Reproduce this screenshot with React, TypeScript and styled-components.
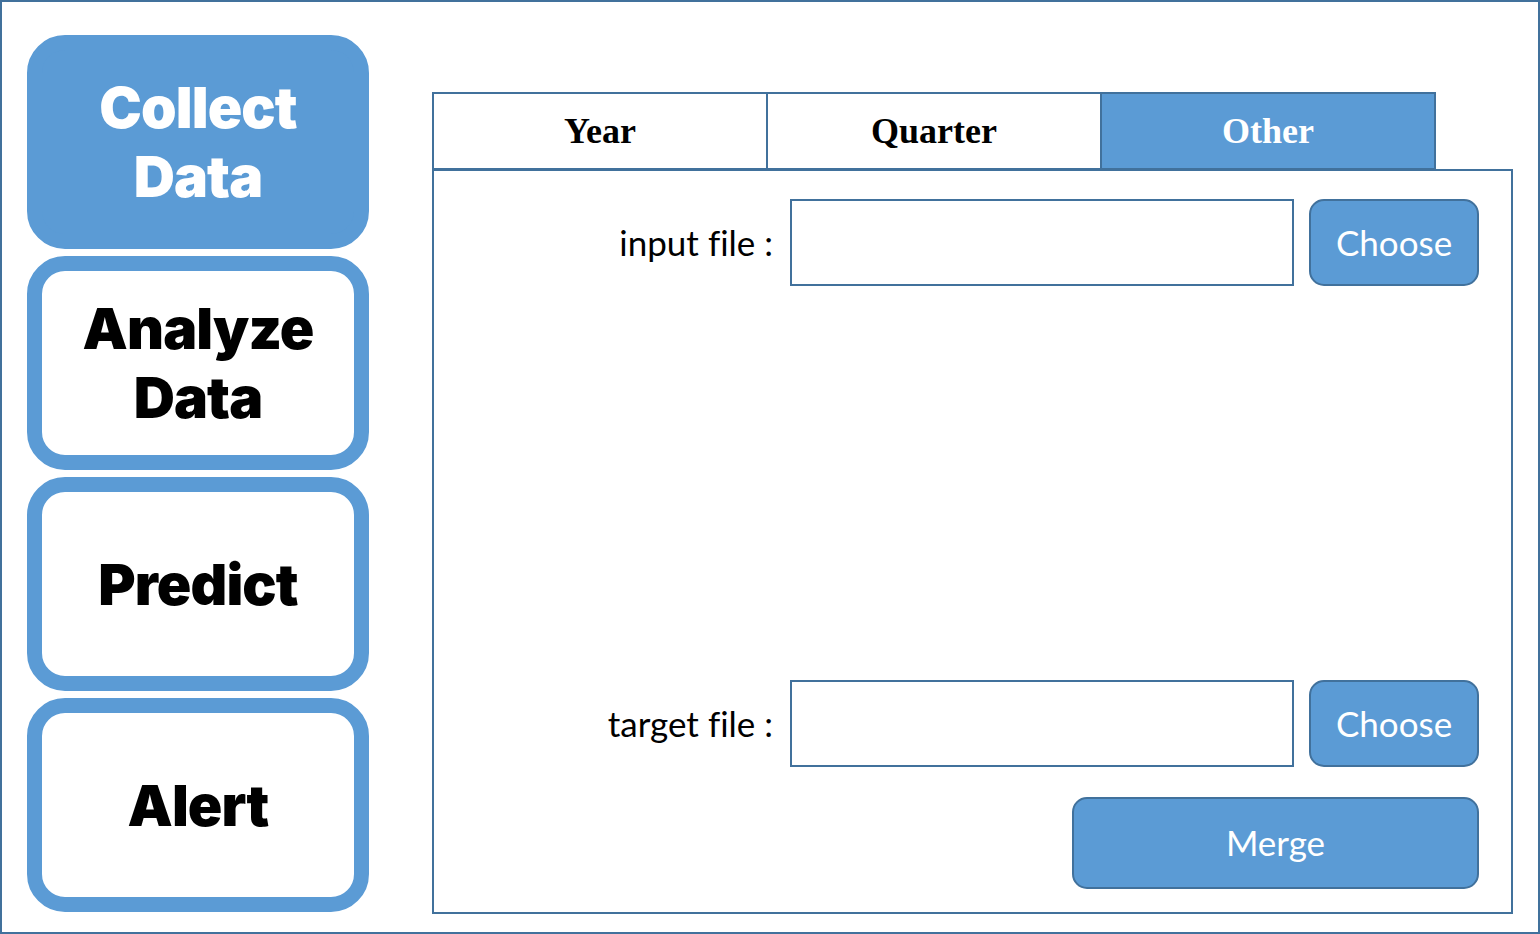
import React from "react";
import styled, { createGlobalStyle } from "styled-components";

const ACCENT = "#5B9BD5";
const EDGE = "#41719C";

const Global = createGlobalStyle`
  html, body { margin: 0; padding: 0; background: #fff; }
  * { box-sizing: border-box; }
`;

const Frame = styled.div`
  width: 1540px;
  height: 934px;
  border: 2px solid ${EDGE};
  display: flex;
  align-items: flex-start;
  padding: 33px 0 0 25px;
  background: #fff;
`;

const Sidebar = styled.nav`
  width: 342px;
  display: flex;
  flex-direction: column;
  gap: 7px;
`;

const NavBox = styled.div<{ $active?: boolean }>`
  height: 214px;
  border-radius: 38px;
  border: 15px solid ${ACCENT};
  background: ${(p) => (p.$active ? ACCENT : "#fff")};
  color: ${(p) => (p.$active ? "#fff" : "#000")};
  display: flex;
  align-items: center;
  justify-content: center;
  text-align: center;
  font-family: "Inter", "Open Sans", sans-serif;
  font-weight: 900;
  font-size: 57px;
  letter-spacing: -0.9px;
  line-height: 69px;
`;

const Main = styled.div`
  margin-left: 63px;
  margin-top: 57px;
  width: 1081px;
  height: 822px;
  display: flex;
  flex-direction: column;
`;

const TabRow = styled.div`
  display: flex;
  height: 78px;
`;

const Tab = styled.div<{ $active?: boolean }>`
  width: 336px;
  height: 78px;
  border: 2px solid ${EDGE};
  margin-left: -2px;
  &:first-child { margin-left: 0; }
  background: ${(p) => (p.$active ? ACCENT : "#fff")};
  color: ${(p) => (p.$active ? "#fff" : "#000")};
  display: flex;
  align-items: center;
  justify-content: center;
  font-family: "Liberation Serif", "Times New Roman", serif;
  font-weight: 700;
  font-size: 36px;
`;

const Panel = styled.div`
  flex: 1;
  margin-top: -1px;
  border: 2px solid ${EDGE};
  display: flex;
  flex-direction: column;
  padding: 28px 32px 23px 0;
`;

const FileRow = styled.div`
  display: grid;
  grid-template-columns: 1fr 504px 170px;
  column-gap: 15px;
  align-items: center;
  height: 87px;
`;

const Label = styled.label`
  text-align: right;
  padding-right: 2px;
  font-family: "Lato", "Open Sans", sans-serif;
  font-size: 35px;
  font-variant-ligatures: none;
  color: #000;
  padding-bottom: 2px;
`;

const FileInput = styled.div`
  height: 87px;
  border: 2px solid ${EDGE};
  background: #fff;
`;

const ActionButton = styled.button<{ $wide?: boolean }>`
  height: ${(p) => (p.$wide ? "92px" : "87px")};
  width: ${(p) => (p.$wide ? "407px" : "170px")};
  background: ${ACCENT};
  border: 2px solid ${EDGE};
  border-radius: 15px;
  color: #fff;
  font-family: "Lato", "Open Sans", sans-serif;
  font-size: 35px;
  padding: 0 0 2px;
  cursor: pointer;
`;

const Spacer = styled.div`
  flex: 1;
`;

const MergeRow = styled.div`
  display: flex;
  justify-content: flex-end;
  margin-top: 30px;
`;

export default function App() {
  return (
    <>
      <Global />
      <Frame>
        <Sidebar>
          <NavBox $active>
            Collect
            <br />
            Data
          </NavBox>
          <NavBox>
            Analyze
            <br />
            Data
          </NavBox>
          <NavBox>Predict</NavBox>
          <NavBox>Alert</NavBox>
        </Sidebar>
        <Main>
          <TabRow>
            <Tab>Year</Tab>
            <Tab>Quarter</Tab>
            <Tab $active>Other</Tab>
          </TabRow>
          <Panel>
            <FileRow>
              <Label>input file :</Label>
              <FileInput />
              <ActionButton>Choose</ActionButton>
            </FileRow>
            <Spacer />
            <FileRow>
              <Label>target file :</Label>
              <FileInput />
              <ActionButton>Choose</ActionButton>
            </FileRow>
            <MergeRow>
              <ActionButton $wide>Merge</ActionButton>
            </MergeRow>
          </Panel>
        </Main>
      </Frame>
    </>
  );
}
